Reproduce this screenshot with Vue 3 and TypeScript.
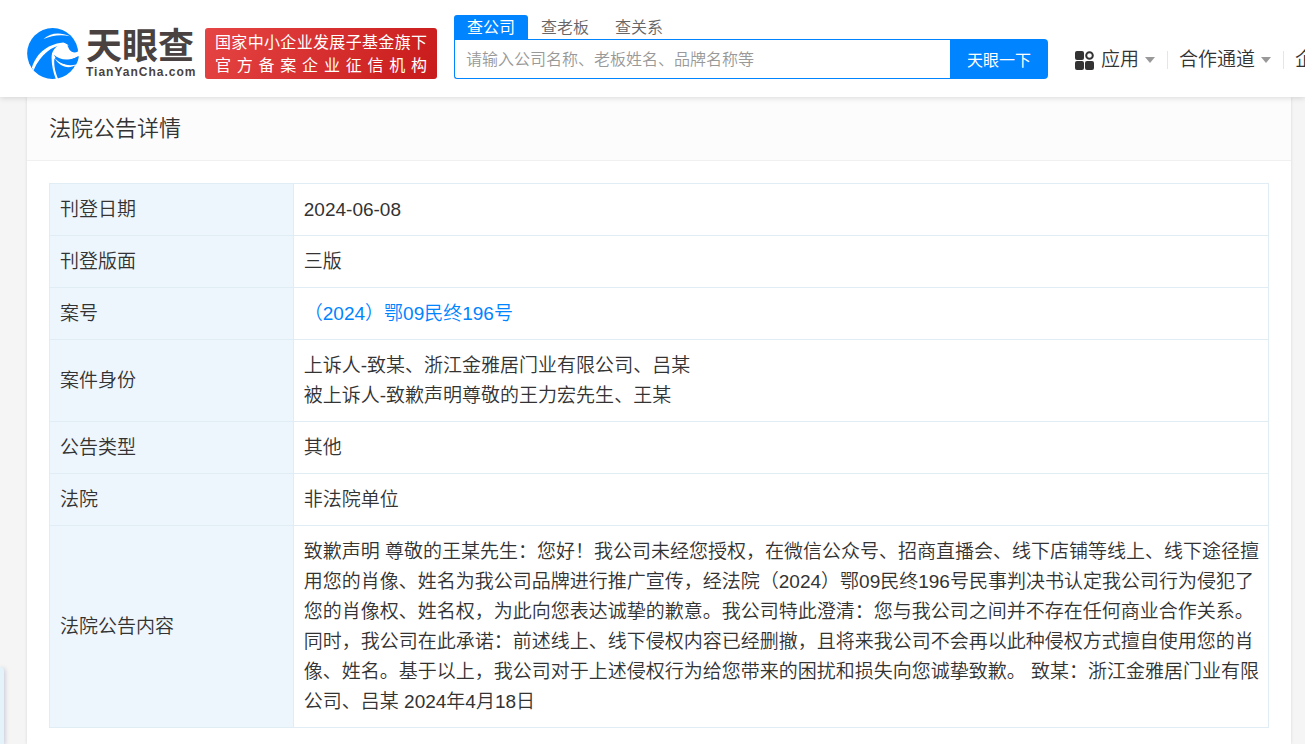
<script setup lang="ts">
import { ref } from 'vue'

interface Row {
  label: string
  lines: string[]
  link?: boolean
}

const tabs: string[] = ['查公司', '查老板', '查关系']
const activeTab = ref(0)
const keyword = ref('')

const rows: Row[] = [
  { label: '刊登日期', lines: ['2024-06-08'] },
  { label: '刊登版面', lines: ['三版'] },
  { label: '案号', lines: ['（2024）鄂09民终196号'], link: true },
  {
    label: '案件身份',
    lines: ['上诉人-致某、浙江金雅居门业有限公司、吕某', '被上诉人-致歉声明尊敬的王力宏先生、王某'],
  },
  { label: '公告类型', lines: ['其他'] },
  { label: '法院', lines: ['非法院单位'] },
  {
    label: '法院公告内容',
    lines: [
      '致歉声明 尊敬的王某先生：您好！我公司未经您授权，在微信公众号、招商直播会、线下店铺等线上、线下途径擅用您的肖像、姓名为我公司品牌进行推广宣传，经法院（2024）鄂09民终196号民事判决书认定我公司行为侵犯了您的肖像权、姓名权，为此向您表达诚挚的歉意。我公司特此澄清：您与我公司之间并不存在任何商业合作关系。同时，我公司在此承诺：前述线上、线下侵权内容已经删撤，且将来我公司不会再以此种侵权方式擅自使用您的肖像、姓名。基于以上，我公司对于上述侵权行为给您带来的困扰和损失向您诚挚致歉。 致某：浙江金雅居门业有限公司、吕某 2024年4月18日',
    ],
  },
]
</script>

<template>
  <div class="page">
    <header class="topbar">
      <a class="brand" href="#" aria-label="天眼查">
        <svg class="mark" viewBox="10 10 152 150" aria-hidden="true">
          <circle cx="85" cy="85" r="75" fill="#0084ff" />
          <path d="M58 42 C76 26 104 20 136 34 C108 28 82 32 58 42 Z" fill="#fff" />
          <path d="M24 127 C36 90 64 58 116 53 C122 54 128 58 132 62 L119 61 C84 60 50 88 29 134 Z" fill="#fff" />
          <path d="M119 58 C100 58 84 72 82 92 C81 116 86 138 95 162 L101 160 C92 138 88 118 90 102 Z" fill="#fff" />
          <path d="M88 92 C90 74 102 58 122 58 C130 60 131 68 134 73 C140 82 150 84 158 80 L166 70 L166 96 L158 94 C134 110 108 106 88 92 Z" fill="#fff" />
          <path d="M89 96 C106 126 132 132 155 118 L158 110 C136 122 108 120 89 96 Z" fill="#fff" />
          <path d="M88 89 C108 106 134 108 162 92 C161 102 158 110 154 117 C130 124 104 116 88 89 Z" fill="#0084ff" />
        </svg>
        <span class="wordmark">
          <strong>天眼查</strong>
          <small>TianYanCha.com</small>
        </span>
      </a>
      <div class="badge">
        <span>国家中小企业发展子基金旗下</span>
        <span>官 方 备 案 企 业 征 信 机 构</span>
      </div>
      <form class="search" @submit.prevent>
        <div class="tabs">
          <button
            v-for="(tab, i) in tabs"
            :key="tab"
            type="button"
            :class="{ active: i === activeTab }"
            @click="activeTab = i"
          >{{ tab }}</button>
        </div>
        <div class="field">
          <input v-model="keyword" type="text" aria-label="搜索" placeholder="请输入公司名称、老板姓名、品牌名称等" />
          <button type="submit">天眼一下</button>
        </div>
      </form>
      <nav class="nav">
        <a href="#">
          <svg class="apps" viewBox="0 0 19 19" aria-hidden="true">
            <rect x="0" y="0" width="9" height="9" rx="2" />
            <rect x="0" y="10" width="9" height="9" rx="2" />
            <rect x="10" y="10" width="9" height="9" rx="2" />
            <circle cx="14.5" cy="4.5" r="3.3" fill="none" stroke="#333" stroke-width="2" />
          </svg>
          应用<i class="caret"></i>
        </a>
        <a href="#">合作通道<i class="caret"></i></a>
        <a href="#">企</a>
      </nav>
    </header>

    <main class="panel">
      <h1>法院公告详情</h1>
      <div class="body">
        <table>
          <tbody>
            <tr v-for="row in rows" :key="row.label">
              <th scope="row">{{ row.label }}</th>
              <td>
                <template v-for="line in row.lines" :key="line">
                  <a v-if="row.link" href="#">{{ line }}</a>
                  <p v-else>{{ line }}</p>
                </template>
              </td>
            </tr>
          </tbody>
        </table>
      </div>
    </main>
    <aside class="dock" aria-hidden="true"></aside>
  </div>
</template>

<style>
html,
body {
  background: #f5f5f5;
}
body {
  margin: 0;
  overflow: hidden;
}
</style>

<style scoped>
.page {
  min-height: 100vh;
  color: #333;
  font-family: "Liberation Sans", "Noto Sans CJK SC", sans-serif;
  font-weight: 350;
  text-spacing-trim: space-all;
}
.page * {
  box-sizing: border-box;
}
a {
  color: inherit;
  text-decoration: none;
}
button,
input {
  font: inherit;
  border: 0;
  padding: 0;
  margin: 0;
}
.topbar {
  position: relative;
  z-index: 2;
  display: flex;
  align-items: flex-start;
  height: 97px;
  padding-left: 27px;
  background: #fff;
  box-shadow: 0 1px 6px rgba(0, 0, 0, 0.14);
}
.brand {
  display: flex;
  flex: none;
  align-items: center;
  gap: 7px;
  width: 178px;
  height: 51px;
  margin-top: 28px;
}
.mark {
  width: 52px;
  height: 51px;
}
.wordmark {
  display: flex;
  flex-direction: column;
  color: #4a4240;
}
.wordmark strong {
  font-size: 36px;
  line-height: 38px;
  font-weight: 700;
}
.wordmark small {
  font-size: 12px;
  line-height: 13px;
  font-weight: 700;
  letter-spacing: 1px;
}
.badge {
  display: flex;
  flex: none;
  flex-direction: column;
  width: 232px;
  height: 51px;
  margin: 28px 17px 0 0;
  padding: 3px 10px;
  border-radius: 3px;
  background: linear-gradient(120deg, #e64545, #c81a1a);
  color: #fff;
  font-size: 16px;
  font-weight: 400;
  line-height: 23px;
  white-space: nowrap;
}
.badge span {
  text-align: justify;
  text-align-last: justify;
}
.search {
  flex: none;
  width: 594px;
  padding-top: 15px;
}
.tabs {
  display: flex;
}
.tabs button {
  width: 74px;
  height: 24px;
  padding-top: 1px;
  font-size: 16px;
  line-height: 23px;
  color: #666;
  background: none;
  border-radius: 3px 3px 0 0;
}
.tabs .active {
  color: #fff;
  font-weight: 400;
  background: #0084ff;
}
.field {
  display: flex;
  height: 40px;
}
.field input {
  flex: 1;
  min-width: 0;
  padding: 1px 11px 0;
  font-size: 16px;
  border: 1px solid #0084ff;
  border-right: 0;
  border-radius: 0 0 0 3px;
  outline: none;
  background: #fff;
}
.field input::placeholder {
  color: #999;
  opacity: 1;
}
.field button {
  width: 98px;
  font-size: 16px;
  font-weight: 400;
  color: #fff;
  background: #0084ff;
  border-radius: 0 4px 4px 0;
}
.nav {
  display: flex;
  flex: 1;
  min-width: 0;
  padding: 45px 0 0 27px;
  overflow: hidden;
  font-size: 19px;
  line-height: 30px;
  white-space: nowrap;
}
.nav a {
  display: flex;
  flex: none;
  align-items: center;
}
.nav a + a::before {
  content: "";
  width: 1px;
  height: 18px;
  margin: 0 11px 0 12px;
  background: #e6e6e6;
}
.apps {
  width: 19px;
  height: 19px;
  margin-right: 7px;
  fill: #333;
}
.caret {
  margin-left: 6px;
  border: 5px solid transparent;
  border-top: 6px solid #999;
  border-bottom: 0;
}
.panel {
  margin: 0 14px 0 27px;
  min-height: calc(100vh - 97px);
  background: #fff;
  box-shadow: 0 0 3px rgba(0, 0, 0, 0.12);
}
h1 {
  margin: 0;
  padding: 16px 22px;
  font-size: 22px;
  line-height: 31px;
  font-weight: 350;
  background: #fcfcfc;
  border-bottom: 1px solid #f0f0f0;
}
.body {
  padding: 22px 22px 16px;
}
table {
  width: 100%;
  border-collapse: collapse;
  table-layout: fixed;
  font-size: 19px;
  line-height: 30px;
}
th,
td {
  border: 1px solid #e1edf5;
  padding: 11px 8px 10px 10px;
  text-align: left;
  font-weight: 350;
}
th {
  width: 20%;
  background: #eef6fd;
}
td a {
  color: #0084ff;
}
td p {
  margin: 0;
}
.dock {
  position: fixed;
  left: 0;
  bottom: 0;
  width: 4px;
  height: 77px;
  border-radius: 0 6px 0 0;
  background: #e3f3f9;
  box-shadow: 1px 1px 4px rgba(80, 90, 140, 0.3);
}
</style>
